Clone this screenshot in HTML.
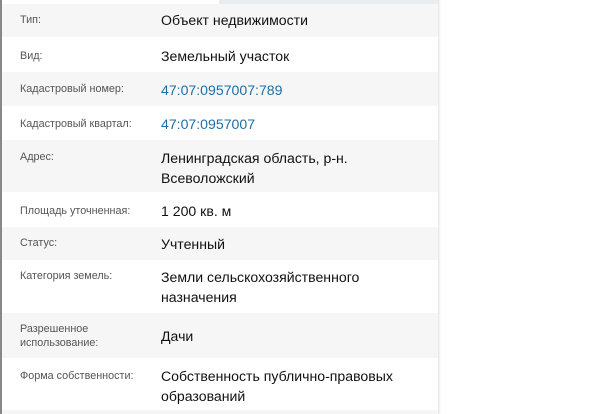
<!DOCTYPE html>
<html><head><meta charset="utf-8"><style>
html,body{margin:0;padding:0;width:600px;height:414px;background:#fff;overflow:hidden;font-family:"Liberation Sans","DejaVu Sans",sans-serif;}
.top{position:absolute;left:219px;top:0;width:219px;height:4px;background:#e8edf2;}
.lb{position:absolute;left:0;top:0;width:2px;height:414px;background:#888;}
.row{position:absolute;left:0;width:438px;}
.g{background:#f6f6f6;}
.l{position:absolute;left:20px;font-size:10.8px;color:#555;line-height:14px;}
.v{position:absolute;left:161px;font-size:14.1px;color:#111;line-height:20px;}
.a{color:#1e6fa8;}
</style></head><body>
<div class="top"></div>
<div class="row g" style="top:4px;height:33px"><div class="l" style="top:9px">Тип:</div><div class="v" style="top:6px">Объект недвижимости</div></div>
<div class="row" style="top:37px;height:35px"><div class="l" style="top:12px">Вид:</div><div class="v" style="top:9px">Земельный участок</div></div>
<div class="row g" style="top:72px;height:34px"><div class="l" style="top:10px">Кадастровый номер:</div><div class="v a" style="top:8px">47:07:0957007:789</div></div>
<div class="row" style="top:106px;height:34px"><div class="l" style="top:11px">Кадастровый квартал:</div><div class="v a" style="top:8px">47:07:0957007</div></div>
<div class="row g" style="top:140px;height:52px"><div class="l" style="top:10px">Адрес:</div><div class="v" style="top:8px">Ленинградская область, р-н.<br>Всеволожский</div></div>
<div class="row" style="top:192px;height:35px"><div class="l" style="top:12px">Площадь уточненная:</div><div class="v" style="top:9px">1 200 кв. м</div></div>
<div class="row g" style="top:227px;height:33px"><div class="l" style="top:9px">Статус:</div><div class="v" style="top:7px">Учтенный</div></div>
<div class="row" style="top:260px;height:53px"><div class="l" style="top:9px">Категория земель:</div><div class="v" style="top:7px">Земли сельскохозяйственного<br>назначения</div></div>
<div class="row g" style="top:313px;height:45px"><div class="l" style="top:9px">Разрешенное<br>использование:</div><div class="v" style="top:13px">Дачи</div></div>
<div class="row" style="top:358px;height:52px"><div class="l" style="top:11px">Форма собственности:</div><div class="v" style="top:8px">Собственность публично-правовых<br>образований</div></div>
<div class="row g" style="top:410px;height:4px"></div>
<div class="lb"></div>
<div style="position:absolute;left:438px;top:0;width:3px;height:414px;background:linear-gradient(90deg,#e6e6e6,#fff)"></div>
</body></html>
